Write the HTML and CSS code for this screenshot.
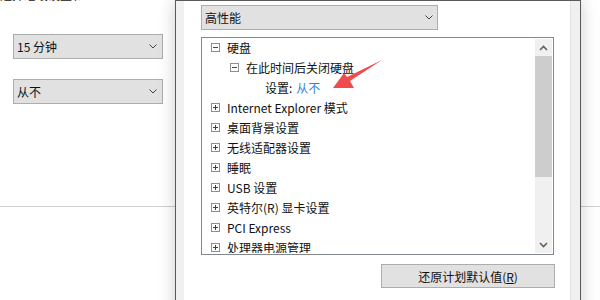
FILE: index.html
```html
<!DOCTYPE html>
<html lang="zh-CN">

<head>
    <meta charset="UTF-8">
    <title>高级设置</title>
    <link rel="stylesheet" href="styles.css">
</head>

<body>
    <div class="page">
        <div class="page-top">
            <div class="cut-label"><span>选择睡眠设置和显示设置</span></div>
            <div class="select select-page first">
                <span>15 分钟</span>
                <svg class="chevron" width="8" height="5" viewBox="0 0 8 5"><polyline points="0.5,0.5 4,4 7.5,0.5" /></svg>
            </div>
            <div class="select select-page second">
                <span>从不</span>
                <svg class="chevron" width="8" height="5" viewBox="0 0 8 5"><polyline points="0.5,0.5 4,4 7.5,0.5" /></svg>
            </div>
        </div>
        <div class="divider"></div>

        <div class="dialog">
            <div class="dialog-body">
                <div class="select select-plan">
                    <span>高性能</span>
                    <svg class="chevron" width="8" height="5" viewBox="0 0 8 5"><polyline points="0.5,0.5 4,4 7.5,0.5" /></svg>
                </div>

                <div class="tree">
                    <div class="tree-list">
                        <div class="row lvl0"><svg class="exp" width="9" height="9" viewBox="0 0 9 9"><rect x="0.5" y="0.5" width="8" height="8" /><line x1="2" y1="4.5" x2="7" y2="4.5" /></svg>硬盘</div>
                        <div class="row lvl1"><svg class="exp" width="9" height="9" viewBox="0 0 9 9"><rect x="0.5" y="0.5" width="8" height="8" /><line x1="2" y1="4.5" x2="7" y2="4.5" /></svg>在此时间后关闭硬盘</div>
                        <div class="row lvl2">设置: <span class="value">从不</span></div>
                        <div class="row lvl0"><svg class="exp plus" width="9" height="9" viewBox="0 0 9 9"><rect x="0.5" y="0.5" width="8" height="8" /><line x1="2" y1="4.5" x2="7" y2="4.5" /><line x1="4.5" y1="2" x2="4.5" y2="7" /></svg>Internet Explorer 模式</div>
                        <div class="row lvl0"><svg class="exp plus" width="9" height="9" viewBox="0 0 9 9"><rect x="0.5" y="0.5" width="8" height="8" /><line x1="2" y1="4.5" x2="7" y2="4.5" /><line x1="4.5" y1="2" x2="4.5" y2="7" /></svg>桌面背景设置</div>
                        <div class="row lvl0"><svg class="exp plus" width="9" height="9" viewBox="0 0 9 9"><rect x="0.5" y="0.5" width="8" height="8" /><line x1="2" y1="4.5" x2="7" y2="4.5" /><line x1="4.5" y1="2" x2="4.5" y2="7" /></svg>无线适配器设置</div>
                        <div class="row lvl0"><svg class="exp plus" width="9" height="9" viewBox="0 0 9 9"><rect x="0.5" y="0.5" width="8" height="8" /><line x1="2" y1="4.5" x2="7" y2="4.5" /><line x1="4.5" y1="2" x2="4.5" y2="7" /></svg>睡眠</div>
                        <div class="row lvl0"><svg class="exp plus" width="9" height="9" viewBox="0 0 9 9"><rect x="0.5" y="0.5" width="8" height="8" /><line x1="2" y1="4.5" x2="7" y2="4.5" /><line x1="4.5" y1="2" x2="4.5" y2="7" /></svg>USB 设置</div>
                        <div class="row lvl0"><svg class="exp plus" width="9" height="9" viewBox="0 0 9 9"><rect x="0.5" y="0.5" width="8" height="8" /><line x1="2" y1="4.5" x2="7" y2="4.5" /><line x1="4.5" y1="2" x2="4.5" y2="7" /></svg>英特尔(R) 显卡设置</div>
                        <div class="row lvl0"><svg class="exp plus" width="9" height="9" viewBox="0 0 9 9"><rect x="0.5" y="0.5" width="8" height="8" /><line x1="2" y1="4.5" x2="7" y2="4.5" /><line x1="4.5" y1="2" x2="4.5" y2="7" /></svg>PCI Express</div>
                        <div class="row lvl0"><svg class="exp plus" width="9" height="9" viewBox="0 0 9 9"><rect x="0.5" y="0.5" width="8" height="8" /><line x1="2" y1="4.5" x2="7" y2="4.5" /><line x1="4.5" y1="2" x2="4.5" y2="7" /></svg>处理器电源管理</div>
                    </div>
                    <div class="scrollbar">
                        <div class="sb-btn"><svg width="9" height="6" viewBox="0 0 9 6"><polyline points="1,5 4.5,1.5 8,5" /></svg></div>
                        <div class="sb-thumb"></div>
                        <div class="sb-track"></div>
                        <div class="sb-btn"><svg width="9" height="6" viewBox="0 0 9 6"><polyline points="1,1 4.5,4.5 8,1" /></svg></div>
                    </div>
                </div>

                <div class="actions">
                    <button class="btn">还原计划默认值(<u>R</u>)</button>
                </div>
            </div>
        </div>

        <!-- red annotation arrow drawn over the dialog -->
        <svg class="arrow" width="60" height="36" viewBox="328 56 60 36">
            <polygon points="333,88 344,73 347,77 382,60 350,81 354,88" />
        </svg>
    </div>
</body>

</html>
```

FILE: styles.css
```css
* {
    box-sizing: border-box;
}

body {
    margin: 0;
    background: #fff;
    font-family: "Noto Sans CJK SC", "Microsoft YaHei", sans-serif;
    font-size: 12px;
    color: #111;
}

.page {
    position: relative;
    width: 600px;
    height: 300px;
    overflow: hidden;
    background: #fff;
}

.page-top {
    height: 206px;
    padding-left: 13px;
}

/* label of the page above, scrolled almost out of view */
.cut-label {
    height: 3px;
    width: 82px;
    margin-left: -13px;
    overflow: hidden;
    white-space: nowrap;
}

.cut-label span {
    display: block;
    line-height: 12px;
    margin-top: -11px;
}

.divider {
    height: 1px;
    background: #cfcfcf;
}

/* combo boxes */
.select {
    display: flex;
    align-items: center;
    justify-content: space-between;
    height: 25px;
    padding: 0 5px 0 3px;
    background: #e1e1e1;
    border: 1px solid #adadad;
}

.select-page {
    width: 150px;
}

.select-page.first {
    margin-top: 31px;
}

.select-page.second {
    margin-top: 20px;
}

.select-plan {
    width: 237px;
    padding-right: 4px;
}

.chevron polyline {
    fill: none;
    stroke: #444;
    stroke-width: 1;
}

/* dialog window */
.dialog {
    position: absolute;
    left: 175px;
    top: 0;
    width: 406px;
    height: 320px;
    display: flex;
    background: #f0f0f0;
    border: 1px solid #5a5a5a;
    padding: 0 9px 0 8px;
    box-shadow: 0 0 16px rgba(0, 0, 0, 0.2);
}

.dialog-body {
    flex: 1;
    background: #fff;
    border-right: 1px solid #e2e2e2;
    padding: 4px 0 0 17px;
}

.tree {
    display: flex;
    width: 353px;
    height: 218px;
    margin-top: 7px;
    padding: 1px;
    border: 1px solid #828790;
    background: #fff;
}

.tree-list {
    flex: 1;
    overflow: hidden;
}

.row {
    display: flex;
    align-items: center;
    height: 20px;
    padding-bottom: 3px;
    white-space: nowrap;
}

.row.lvl0 {
    padding-left: 8px;
}

.row.lvl1 {
    padding-left: 27px;
}

.row.lvl2 {
    padding-left: 62px;
}

.exp {
    flex: none;
    margin-right: 7px;
}

.exp rect {
    fill: #fcfcfc;
    stroke: #8e8f8f;
}

.exp line {
    stroke: #4a4a4a;
    stroke-width: 1;
}

.exp.plus line {
    stroke: #2c3e7a;
}

.value {
    color: #2f86e0;
    margin-left: 4px;
}

.scrollbar {
    width: 17px;
    display: flex;
    flex-direction: column;
    background: #f0f0f0;
}

.sb-btn {
    height: 17px;
    display: flex;
    align-items: center;
    justify-content: center;
}

.sb-btn polyline {
    fill: none;
    stroke: #606060;
    stroke-width: 1.6;
}

.sb-thumb {
    height: 121px;
    background: #cdcdcd;
}

.sb-track {
    flex: 1;
}

.actions {
    width: 354px;
    display: flex;
    justify-content: flex-end;
    margin-top: 9px;
}

.btn {
    width: 174px;
    height: 24px;
    padding: 0;
    font-family: inherit;
    font-size: 12px;
    color: #111;
    background: #e1e1e1;
    border: 1px solid #adadad;
}

.arrow {
    position: absolute;
    left: 328px;
    top: 56px;
}

.arrow polygon {
    fill: #ef4d4d;
}
```
